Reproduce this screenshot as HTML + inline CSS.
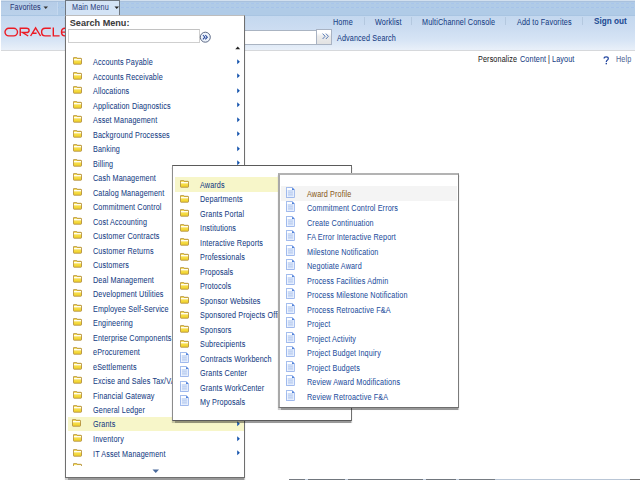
<!DOCTYPE html>
<html><head><meta charset="utf-8">
<style>
html,body{margin:0;padding:0;width:640px;height:480px;overflow:hidden;background:#fff}
body{position:relative;font-family:"Liberation Sans",sans-serif}
.t{position:absolute;white-space:nowrap;transform-origin:0 0;-webkit-text-stroke:0.05px currentColor;font-family:"Liberation Sans",sans-serif}
svg{display:block}
</style></head><body>
<div style="position:absolute;left:1px;top:0px;width:634px;height:1px;background:#d2e0ef"></div>
<div style="position:absolute;left:1px;top:1px;width:634px;height:1px;background:#a9c1dd"></div>
<div style="position:absolute;left:1px;top:2px;width:634px;height:13px;background:#b0cbe7"></div>
<div style="position:absolute;left:1px;top:3px;width:634px;height:1px;background:repeating-linear-gradient(90deg,#a9c6ec 0 3px,#b4cde6 3px 5px)"></div>
<div style="position:absolute;left:1px;top:7px;width:634px;height:1px;background:repeating-linear-gradient(90deg,#a6c3ea 0 3px,#b2cde9 3px 5px)"></div>
<div style="position:absolute;left:1px;top:2px;width:56px;height:13px;background:linear-gradient(#b6cde8,#bad1ea)"></div>
<div style="position:absolute;left:1px;top:15px;width:634px;height:1px;background:#a9c5e2"></div>
<div style="position:absolute;left:1px;top:16px;width:634px;height:34px;background:linear-gradient(#c4d8ef,#cbdcf1 35%,#d6e4f5 70%,#e9f0f9)"></div>
<div style="position:absolute;left:1px;top:50px;width:634px;height:1px;background:#d6d8db"></div>
<div class="t" style="left:10px;top:2.90px;font-size:8.5px;line-height:8.5px;color:#2c3a78;transform:scaleX(0.85);letter-spacing:0.15px;">Favorites</div>
<svg width="6" height="4" style="position:absolute;left:42.5px;top:5.5px"><path d="M0.5 0.5 H5 L2.75 3 Z" fill="#333"/></svg>
<div style="position:absolute;left:57px;top:2px;width:1px;height:13px;background:#c4d8ef"></div>
<svg width="64" height="12" viewBox="0 0 64 12" style="position:absolute;left:3px;top:26px">
<g fill="none" stroke="#ec1b24" stroke-width="1.4" stroke-linecap="butt">
<rect x="2" y="2.3" width="12.5" height="7.6" rx="3.8" ry="3.8"/>
<path d="M17.25 10 V2.3 H23.4 Q26.1 2.3 26.1 4.4 Q26.1 6.5 23.4 6.5 H19.5 L25.2 10"/>
<path d="M27.6 10 L32.6 1.8 L37.6 10 M29.6 7.3 H33.6"/>
<path d="M47.8 9.9 H42.2 Q38.6 9.9 38.6 6.1 Q38.6 2.3 42.2 2.3 H47.8"/>
<path d="M50.3 1.6 V9.9 H56.6"/>
<path d="M64.5 9.9 H62 Q58.5 9.9 58.5 6.1 Q58.5 2.3 62 2.3 H64.5 M59 6.1 H64.5"/>
</g></svg>
<div style="position:absolute;left:240px;top:30px;width:77px;height:15px;background:#fff;border:1px solid #aab4c2;box-sizing:border-box"></div>
<div style="position:absolute;left:316px;top:29px;width:16px;height:16px;background:linear-gradient(#fff 0,#fff 20%,#ececec 45%,#e2e2e2 100%);border:1px solid #a9b3c3;box-sizing:border-box"></div>
<svg width="8" height="7" viewBox="0 0 8 7" style="position:absolute;left:321.5px;top:33.3px"><path d="M0.6 0.6 L3.1 3.3 L0.6 6 M3.9 0.6 L6.4 3.3 L3.9 6" fill="none" stroke="#5a7db8" stroke-width="1"/></svg>
<div class="t" style="left:333.2px;top:17.90px;font-size:8.5px;line-height:8.5px;color:#163d84;transform:scaleX(0.85);letter-spacing:0.15px;">Home</div>
<div style="position:absolute;left:364px;top:17px;width:1px;height:8px;background:#b4c8df"></div>
<div class="t" style="left:374.5px;top:17.90px;font-size:8.5px;line-height:8.5px;color:#163d84;transform:scaleX(0.85);letter-spacing:0.15px;">Worklist</div>
<div style="position:absolute;left:411px;top:17px;width:1px;height:8px;background:#b4c8df"></div>
<div class="t" style="left:422.3px;top:17.90px;font-size:8.5px;line-height:8.5px;color:#163d84;transform:scaleX(0.85);letter-spacing:0.15px;">MultiChannel Console</div>
<div style="position:absolute;left:505px;top:17px;width:1px;height:8px;background:#b4c8df"></div>
<div class="t" style="left:517px;top:17.90px;font-size:8.5px;line-height:8.5px;color:#163d84;transform:scaleX(0.85);letter-spacing:0.15px;">Add to Favorites</div>
<div style="position:absolute;left:582px;top:17px;width:1px;height:8px;background:#b4c8df"></div>
<div class="t" style="left:594.2px;top:16.06px;font-size:9.5px;line-height:9.5px;color:#1d4a93;transform:scaleX(0.86);font-weight:bold;">Sign out</div>
<div class="t" style="left:336.5px;top:34.10px;font-size:8.5px;line-height:8.5px;color:#163d84;transform:scaleX(0.85);letter-spacing:0.15px;">Advanced Search</div>
<div class="t" style="left:478px;top:55.30px;font-size:8.5px;line-height:8.5px;color:#222;transform:scaleX(0.85);letter-spacing:0.15px;">Personalize</div>
<div class="t" style="left:519.7px;top:55.30px;font-size:8.5px;line-height:8.5px;color:#163d84;transform:scaleX(0.85);letter-spacing:0.15px;">Content</div>
<div class="t" style="left:548.2px;top:55.30px;font-size:8.5px;line-height:8.5px;color:#222;transform:scaleX(0.85);letter-spacing:0.15px;">|</div>
<div class="t" style="left:551.6px;top:55.30px;font-size:8.5px;line-height:8.5px;color:#163d84;transform:scaleX(0.85);letter-spacing:0.15px;">Layout</div>
<svg width="7" height="9" viewBox="0 0 7 9" style="position:absolute;left:603px;top:55.5px"><path d="M1.1 2.6 Q1.1 0.9 3.2 0.9 Q5.3 0.9 5.3 2.5 Q5.3 3.6 4.2 4.3 Q3.3 4.9 3.3 6" fill="none" stroke="#2447a0" stroke-width="1.25"/><rect x="2.6" y="6.9" width="1.4" height="1.4" fill="#2447a0"/></svg>
<div class="t" style="left:615.8px;top:55.30px;font-size:8.5px;line-height:8.5px;color:#4f6796;transform:scaleX(0.85);letter-spacing:0.15px;">Help</div>
<div style="position:absolute;left:65px;top:0px;width:55px;height:16px;background:#d3e3f5;border:1px solid #6f7780;border-bottom:none;box-sizing:border-box"></div>
<div class="t" style="left:72px;top:2.50px;font-size:8.5px;line-height:8.5px;color:#2f4380;transform:scaleX(0.85);letter-spacing:0.15px;">Main Menu</div>
<svg width="6" height="4" style="position:absolute;left:113.5px;top:5.7px"><path d="M0.5 0.5 H5 L2.75 3 Z" fill="#222"/></svg>
<div style="position:absolute;left:65px;top:15px;width:180px;height:463px;background:#fff;border:1px solid #6f6f6f;border-top-color:#bdbdbd;box-sizing:border-box;box-shadow:0 1.5px 1px rgba(0,0,0,0.4)"></div>
<div class="t" style="left:69.8px;top:18.60px;font-size:9.1px;line-height:9.1px;color:#3b3b3b;font-weight:bold;">Search Menu:</div>
<div style="position:absolute;left:68px;top:29px;width:132px;height:14px;background:#fff;border:1px solid #cfcfcf;border-top-color:#c2c2c2;box-sizing:border-box"></div>
<svg width="13" height="13" viewBox="0 0 13 13" style="position:absolute;left:199px;top:31px">
<circle cx="6.3" cy="6.2" r="5" fill="#eef4fc" stroke="#5d6a86" stroke-width="1"/>
<path d="M3.9 4 L5.9 6.2 L3.9 8.4 M6.3 4 L8.3 6.2 L6.3 8.4" fill="none" stroke="#27479a" stroke-width="1.05"/>
</svg>
<svg width="6" height="4" style="position:absolute;left:234.8px;top:46.3px"><path d="M0.3 3.3 H5.2 L2.75 0.5 Z" fill="#222"/></svg>
<div style="position:absolute;left:66px;top:52px;width:178px;height:414px;overflow:hidden">
<svg width="9" height="8" viewBox="0 0 9 8" style="position:absolute;left:7px;top:5.0px"><path d="M0.45 1.1 Q0.45 0.4 1.1 0.4 H3.4 Q4 0.4 4.2 1.3 H7.9 Q8.5 1.3 8.5 1.9 V6.6 Q8.5 7.2 7.9 7.2 H1.1 Q0.45 7.2 0.45 6.6 Z" fill="#f4d836" stroke="#a98333" stroke-width="0.8"/><rect x="0.9" y="2" width="7.2" height="1" fill="#fffdf0"/><rect x="0.9" y="3" width="7.2" height="1.2" fill="#fbe986"/><rect x="1.3" y="0.9" width="2.3" height="0.6" fill="#f9e58a"/></svg>
<div class="t" style="left:27px;top:6.05px;font-size:8.5px;line-height:8.5px;color:#163d84;transform:scaleX(0.85);letter-spacing:0.15px;">Accounts Payable</div>
<svg width="4" height="6" viewBox="0 0 4 6" style="position:absolute;left:170.7px;top:6.950000000000003px"><path d="M0.2 0.3 L2.9 2.75 L0.2 5.2 Z" fill="#1554ad"/></svg>
<svg width="9" height="8" viewBox="0 0 9 8" style="position:absolute;left:7px;top:19.5px"><path d="M0.45 1.1 Q0.45 0.4 1.1 0.4 H3.4 Q4 0.4 4.2 1.3 H7.9 Q8.5 1.3 8.5 1.9 V6.6 Q8.5 7.2 7.9 7.2 H1.1 Q0.45 7.2 0.45 6.6 Z" fill="#f4d836" stroke="#a98333" stroke-width="0.8"/><rect x="0.9" y="2" width="7.2" height="1" fill="#fffdf0"/><rect x="0.9" y="3" width="7.2" height="1.2" fill="#fbe986"/><rect x="1.3" y="0.9" width="2.3" height="0.6" fill="#f9e58a"/></svg>
<div class="t" style="left:27px;top:20.55px;font-size:8.5px;line-height:8.5px;color:#163d84;transform:scaleX(0.85);letter-spacing:0.15px;">Accounts Receivable</div>
<svg width="4" height="6" viewBox="0 0 4 6" style="position:absolute;left:170.7px;top:21.450000000000003px"><path d="M0.2 0.3 L2.9 2.75 L0.2 5.2 Z" fill="#1554ad"/></svg>
<svg width="9" height="8" viewBox="0 0 9 8" style="position:absolute;left:7px;top:34.0px"><path d="M0.45 1.1 Q0.45 0.4 1.1 0.4 H3.4 Q4 0.4 4.2 1.3 H7.9 Q8.5 1.3 8.5 1.9 V6.6 Q8.5 7.2 7.9 7.2 H1.1 Q0.45 7.2 0.45 6.6 Z" fill="#f4d836" stroke="#a98333" stroke-width="0.8"/><rect x="0.9" y="2" width="7.2" height="1" fill="#fffdf0"/><rect x="0.9" y="3" width="7.2" height="1.2" fill="#fbe986"/><rect x="1.3" y="0.9" width="2.3" height="0.6" fill="#f9e58a"/></svg>
<div class="t" style="left:27px;top:35.05px;font-size:8.5px;line-height:8.5px;color:#163d84;transform:scaleX(0.85);letter-spacing:0.15px;">Allocations</div>
<svg width="4" height="6" viewBox="0 0 4 6" style="position:absolute;left:170.7px;top:35.95px"><path d="M0.2 0.3 L2.9 2.75 L0.2 5.2 Z" fill="#1554ad"/></svg>
<svg width="9" height="8" viewBox="0 0 9 8" style="position:absolute;left:7px;top:48.5px"><path d="M0.45 1.1 Q0.45 0.4 1.1 0.4 H3.4 Q4 0.4 4.2 1.3 H7.9 Q8.5 1.3 8.5 1.9 V6.6 Q8.5 7.2 7.9 7.2 H1.1 Q0.45 7.2 0.45 6.6 Z" fill="#f4d836" stroke="#a98333" stroke-width="0.8"/><rect x="0.9" y="2" width="7.2" height="1" fill="#fffdf0"/><rect x="0.9" y="3" width="7.2" height="1.2" fill="#fbe986"/><rect x="1.3" y="0.9" width="2.3" height="0.6" fill="#f9e58a"/></svg>
<div class="t" style="left:27px;top:49.55px;font-size:8.5px;line-height:8.5px;color:#163d84;transform:scaleX(0.85);letter-spacing:0.15px;">Application Diagnostics</div>
<svg width="4" height="6" viewBox="0 0 4 6" style="position:absolute;left:170.7px;top:50.45px"><path d="M0.2 0.3 L2.9 2.75 L0.2 5.2 Z" fill="#1554ad"/></svg>
<svg width="9" height="8" viewBox="0 0 9 8" style="position:absolute;left:7px;top:63.0px"><path d="M0.45 1.1 Q0.45 0.4 1.1 0.4 H3.4 Q4 0.4 4.2 1.3 H7.9 Q8.5 1.3 8.5 1.9 V6.6 Q8.5 7.2 7.9 7.2 H1.1 Q0.45 7.2 0.45 6.6 Z" fill="#f4d836" stroke="#a98333" stroke-width="0.8"/><rect x="0.9" y="2" width="7.2" height="1" fill="#fffdf0"/><rect x="0.9" y="3" width="7.2" height="1.2" fill="#fbe986"/><rect x="1.3" y="0.9" width="2.3" height="0.6" fill="#f9e58a"/></svg>
<div class="t" style="left:27px;top:64.05px;font-size:8.5px;line-height:8.5px;color:#163d84;transform:scaleX(0.85);letter-spacing:0.15px;">Asset Management</div>
<svg width="4" height="6" viewBox="0 0 4 6" style="position:absolute;left:170.7px;top:64.95px"><path d="M0.2 0.3 L2.9 2.75 L0.2 5.2 Z" fill="#1554ad"/></svg>
<svg width="9" height="8" viewBox="0 0 9 8" style="position:absolute;left:7px;top:77.5px"><path d="M0.45 1.1 Q0.45 0.4 1.1 0.4 H3.4 Q4 0.4 4.2 1.3 H7.9 Q8.5 1.3 8.5 1.9 V6.6 Q8.5 7.2 7.9 7.2 H1.1 Q0.45 7.2 0.45 6.6 Z" fill="#f4d836" stroke="#a98333" stroke-width="0.8"/><rect x="0.9" y="2" width="7.2" height="1" fill="#fffdf0"/><rect x="0.9" y="3" width="7.2" height="1.2" fill="#fbe986"/><rect x="1.3" y="0.9" width="2.3" height="0.6" fill="#f9e58a"/></svg>
<div class="t" style="left:27px;top:78.55px;font-size:8.5px;line-height:8.5px;color:#163d84;transform:scaleX(0.85);letter-spacing:0.15px;">Background Processes</div>
<svg width="4" height="6" viewBox="0 0 4 6" style="position:absolute;left:170.7px;top:79.44999999999999px"><path d="M0.2 0.3 L2.9 2.75 L0.2 5.2 Z" fill="#1554ad"/></svg>
<svg width="9" height="8" viewBox="0 0 9 8" style="position:absolute;left:7px;top:92.0px"><path d="M0.45 1.1 Q0.45 0.4 1.1 0.4 H3.4 Q4 0.4 4.2 1.3 H7.9 Q8.5 1.3 8.5 1.9 V6.6 Q8.5 7.2 7.9 7.2 H1.1 Q0.45 7.2 0.45 6.6 Z" fill="#f4d836" stroke="#a98333" stroke-width="0.8"/><rect x="0.9" y="2" width="7.2" height="1" fill="#fffdf0"/><rect x="0.9" y="3" width="7.2" height="1.2" fill="#fbe986"/><rect x="1.3" y="0.9" width="2.3" height="0.6" fill="#f9e58a"/></svg>
<div class="t" style="left:27px;top:93.05px;font-size:8.5px;line-height:8.5px;color:#163d84;transform:scaleX(0.85);letter-spacing:0.15px;">Banking</div>
<svg width="4" height="6" viewBox="0 0 4 6" style="position:absolute;left:170.7px;top:93.94999999999999px"><path d="M0.2 0.3 L2.9 2.75 L0.2 5.2 Z" fill="#1554ad"/></svg>
<svg width="9" height="8" viewBox="0 0 9 8" style="position:absolute;left:7px;top:106.5px"><path d="M0.45 1.1 Q0.45 0.4 1.1 0.4 H3.4 Q4 0.4 4.2 1.3 H7.9 Q8.5 1.3 8.5 1.9 V6.6 Q8.5 7.2 7.9 7.2 H1.1 Q0.45 7.2 0.45 6.6 Z" fill="#f4d836" stroke="#a98333" stroke-width="0.8"/><rect x="0.9" y="2" width="7.2" height="1" fill="#fffdf0"/><rect x="0.9" y="3" width="7.2" height="1.2" fill="#fbe986"/><rect x="1.3" y="0.9" width="2.3" height="0.6" fill="#f9e58a"/></svg>
<div class="t" style="left:27px;top:107.55px;font-size:8.5px;line-height:8.5px;color:#163d84;transform:scaleX(0.85);letter-spacing:0.15px;">Billing</div>
<svg width="4" height="6" viewBox="0 0 4 6" style="position:absolute;left:170.7px;top:108.44999999999999px"><path d="M0.2 0.3 L2.9 2.75 L0.2 5.2 Z" fill="#1554ad"/></svg>
<svg width="9" height="8" viewBox="0 0 9 8" style="position:absolute;left:7px;top:121.0px"><path d="M0.45 1.1 Q0.45 0.4 1.1 0.4 H3.4 Q4 0.4 4.2 1.3 H7.9 Q8.5 1.3 8.5 1.9 V6.6 Q8.5 7.2 7.9 7.2 H1.1 Q0.45 7.2 0.45 6.6 Z" fill="#f4d836" stroke="#a98333" stroke-width="0.8"/><rect x="0.9" y="2" width="7.2" height="1" fill="#fffdf0"/><rect x="0.9" y="3" width="7.2" height="1.2" fill="#fbe986"/><rect x="1.3" y="0.9" width="2.3" height="0.6" fill="#f9e58a"/></svg>
<div class="t" style="left:27px;top:122.05px;font-size:8.5px;line-height:8.5px;color:#163d84;transform:scaleX(0.85);letter-spacing:0.15px;">Cash Management</div>
<svg width="4" height="6" viewBox="0 0 4 6" style="position:absolute;left:170.7px;top:122.94999999999999px"><path d="M0.2 0.3 L2.9 2.75 L0.2 5.2 Z" fill="#1554ad"/></svg>
<svg width="9" height="8" viewBox="0 0 9 8" style="position:absolute;left:7px;top:135.5px"><path d="M0.45 1.1 Q0.45 0.4 1.1 0.4 H3.4 Q4 0.4 4.2 1.3 H7.9 Q8.5 1.3 8.5 1.9 V6.6 Q8.5 7.2 7.9 7.2 H1.1 Q0.45 7.2 0.45 6.6 Z" fill="#f4d836" stroke="#a98333" stroke-width="0.8"/><rect x="0.9" y="2" width="7.2" height="1" fill="#fffdf0"/><rect x="0.9" y="3" width="7.2" height="1.2" fill="#fbe986"/><rect x="1.3" y="0.9" width="2.3" height="0.6" fill="#f9e58a"/></svg>
<div class="t" style="left:27px;top:136.55px;font-size:8.5px;line-height:8.5px;color:#163d84;transform:scaleX(0.85);letter-spacing:0.15px;">Catalog Management</div>
<svg width="4" height="6" viewBox="0 0 4 6" style="position:absolute;left:170.7px;top:137.45px"><path d="M0.2 0.3 L2.9 2.75 L0.2 5.2 Z" fill="#1554ad"/></svg>
<svg width="9" height="8" viewBox="0 0 9 8" style="position:absolute;left:7px;top:150.0px"><path d="M0.45 1.1 Q0.45 0.4 1.1 0.4 H3.4 Q4 0.4 4.2 1.3 H7.9 Q8.5 1.3 8.5 1.9 V6.6 Q8.5 7.2 7.9 7.2 H1.1 Q0.45 7.2 0.45 6.6 Z" fill="#f4d836" stroke="#a98333" stroke-width="0.8"/><rect x="0.9" y="2" width="7.2" height="1" fill="#fffdf0"/><rect x="0.9" y="3" width="7.2" height="1.2" fill="#fbe986"/><rect x="1.3" y="0.9" width="2.3" height="0.6" fill="#f9e58a"/></svg>
<div class="t" style="left:27px;top:151.05px;font-size:8.5px;line-height:8.5px;color:#163d84;transform:scaleX(0.85);letter-spacing:0.15px;">Commitment Control</div>
<svg width="4" height="6" viewBox="0 0 4 6" style="position:absolute;left:170.7px;top:151.95px"><path d="M0.2 0.3 L2.9 2.75 L0.2 5.2 Z" fill="#1554ad"/></svg>
<svg width="9" height="8" viewBox="0 0 9 8" style="position:absolute;left:7px;top:164.5px"><path d="M0.45 1.1 Q0.45 0.4 1.1 0.4 H3.4 Q4 0.4 4.2 1.3 H7.9 Q8.5 1.3 8.5 1.9 V6.6 Q8.5 7.2 7.9 7.2 H1.1 Q0.45 7.2 0.45 6.6 Z" fill="#f4d836" stroke="#a98333" stroke-width="0.8"/><rect x="0.9" y="2" width="7.2" height="1" fill="#fffdf0"/><rect x="0.9" y="3" width="7.2" height="1.2" fill="#fbe986"/><rect x="1.3" y="0.9" width="2.3" height="0.6" fill="#f9e58a"/></svg>
<div class="t" style="left:27px;top:165.55px;font-size:8.5px;line-height:8.5px;color:#163d84;transform:scaleX(0.85);letter-spacing:0.15px;">Cost Accounting</div>
<svg width="4" height="6" viewBox="0 0 4 6" style="position:absolute;left:170.7px;top:166.45px"><path d="M0.2 0.3 L2.9 2.75 L0.2 5.2 Z" fill="#1554ad"/></svg>
<svg width="9" height="8" viewBox="0 0 9 8" style="position:absolute;left:7px;top:179.0px"><path d="M0.45 1.1 Q0.45 0.4 1.1 0.4 H3.4 Q4 0.4 4.2 1.3 H7.9 Q8.5 1.3 8.5 1.9 V6.6 Q8.5 7.2 7.9 7.2 H1.1 Q0.45 7.2 0.45 6.6 Z" fill="#f4d836" stroke="#a98333" stroke-width="0.8"/><rect x="0.9" y="2" width="7.2" height="1" fill="#fffdf0"/><rect x="0.9" y="3" width="7.2" height="1.2" fill="#fbe986"/><rect x="1.3" y="0.9" width="2.3" height="0.6" fill="#f9e58a"/></svg>
<div class="t" style="left:27px;top:180.05px;font-size:8.5px;line-height:8.5px;color:#163d84;transform:scaleX(0.85);letter-spacing:0.15px;">Customer Contracts</div>
<svg width="4" height="6" viewBox="0 0 4 6" style="position:absolute;left:170.7px;top:180.95px"><path d="M0.2 0.3 L2.9 2.75 L0.2 5.2 Z" fill="#1554ad"/></svg>
<svg width="9" height="8" viewBox="0 0 9 8" style="position:absolute;left:7px;top:193.5px"><path d="M0.45 1.1 Q0.45 0.4 1.1 0.4 H3.4 Q4 0.4 4.2 1.3 H7.9 Q8.5 1.3 8.5 1.9 V6.6 Q8.5 7.2 7.9 7.2 H1.1 Q0.45 7.2 0.45 6.6 Z" fill="#f4d836" stroke="#a98333" stroke-width="0.8"/><rect x="0.9" y="2" width="7.2" height="1" fill="#fffdf0"/><rect x="0.9" y="3" width="7.2" height="1.2" fill="#fbe986"/><rect x="1.3" y="0.9" width="2.3" height="0.6" fill="#f9e58a"/></svg>
<div class="t" style="left:27px;top:194.55px;font-size:8.5px;line-height:8.5px;color:#163d84;transform:scaleX(0.85);letter-spacing:0.15px;">Customer Returns</div>
<svg width="4" height="6" viewBox="0 0 4 6" style="position:absolute;left:170.7px;top:195.45px"><path d="M0.2 0.3 L2.9 2.75 L0.2 5.2 Z" fill="#1554ad"/></svg>
<svg width="9" height="8" viewBox="0 0 9 8" style="position:absolute;left:7px;top:208.0px"><path d="M0.45 1.1 Q0.45 0.4 1.1 0.4 H3.4 Q4 0.4 4.2 1.3 H7.9 Q8.5 1.3 8.5 1.9 V6.6 Q8.5 7.2 7.9 7.2 H1.1 Q0.45 7.2 0.45 6.6 Z" fill="#f4d836" stroke="#a98333" stroke-width="0.8"/><rect x="0.9" y="2" width="7.2" height="1" fill="#fffdf0"/><rect x="0.9" y="3" width="7.2" height="1.2" fill="#fbe986"/><rect x="1.3" y="0.9" width="2.3" height="0.6" fill="#f9e58a"/></svg>
<div class="t" style="left:27px;top:209.05px;font-size:8.5px;line-height:8.5px;color:#163d84;transform:scaleX(0.85);letter-spacing:0.15px;">Customers</div>
<svg width="4" height="6" viewBox="0 0 4 6" style="position:absolute;left:170.7px;top:209.95px"><path d="M0.2 0.3 L2.9 2.75 L0.2 5.2 Z" fill="#1554ad"/></svg>
<svg width="9" height="8" viewBox="0 0 9 8" style="position:absolute;left:7px;top:222.5px"><path d="M0.45 1.1 Q0.45 0.4 1.1 0.4 H3.4 Q4 0.4 4.2 1.3 H7.9 Q8.5 1.3 8.5 1.9 V6.6 Q8.5 7.2 7.9 7.2 H1.1 Q0.45 7.2 0.45 6.6 Z" fill="#f4d836" stroke="#a98333" stroke-width="0.8"/><rect x="0.9" y="2" width="7.2" height="1" fill="#fffdf0"/><rect x="0.9" y="3" width="7.2" height="1.2" fill="#fbe986"/><rect x="1.3" y="0.9" width="2.3" height="0.6" fill="#f9e58a"/></svg>
<div class="t" style="left:27px;top:223.55px;font-size:8.5px;line-height:8.5px;color:#163d84;transform:scaleX(0.85);letter-spacing:0.15px;">Deal Management</div>
<svg width="4" height="6" viewBox="0 0 4 6" style="position:absolute;left:170.7px;top:224.45px"><path d="M0.2 0.3 L2.9 2.75 L0.2 5.2 Z" fill="#1554ad"/></svg>
<svg width="9" height="8" viewBox="0 0 9 8" style="position:absolute;left:7px;top:237.0px"><path d="M0.45 1.1 Q0.45 0.4 1.1 0.4 H3.4 Q4 0.4 4.2 1.3 H7.9 Q8.5 1.3 8.5 1.9 V6.6 Q8.5 7.2 7.9 7.2 H1.1 Q0.45 7.2 0.45 6.6 Z" fill="#f4d836" stroke="#a98333" stroke-width="0.8"/><rect x="0.9" y="2" width="7.2" height="1" fill="#fffdf0"/><rect x="0.9" y="3" width="7.2" height="1.2" fill="#fbe986"/><rect x="1.3" y="0.9" width="2.3" height="0.6" fill="#f9e58a"/></svg>
<div class="t" style="left:27px;top:238.05px;font-size:8.5px;line-height:8.5px;color:#163d84;transform:scaleX(0.85);letter-spacing:0.15px;">Development Utilities</div>
<svg width="4" height="6" viewBox="0 0 4 6" style="position:absolute;left:170.7px;top:238.95px"><path d="M0.2 0.3 L2.9 2.75 L0.2 5.2 Z" fill="#1554ad"/></svg>
<svg width="9" height="8" viewBox="0 0 9 8" style="position:absolute;left:7px;top:251.5px"><path d="M0.45 1.1 Q0.45 0.4 1.1 0.4 H3.4 Q4 0.4 4.2 1.3 H7.9 Q8.5 1.3 8.5 1.9 V6.6 Q8.5 7.2 7.9 7.2 H1.1 Q0.45 7.2 0.45 6.6 Z" fill="#f4d836" stroke="#a98333" stroke-width="0.8"/><rect x="0.9" y="2" width="7.2" height="1" fill="#fffdf0"/><rect x="0.9" y="3" width="7.2" height="1.2" fill="#fbe986"/><rect x="1.3" y="0.9" width="2.3" height="0.6" fill="#f9e58a"/></svg>
<div class="t" style="left:27px;top:252.55px;font-size:8.5px;line-height:8.5px;color:#163d84;transform:scaleX(0.85);letter-spacing:0.15px;">Employee Self-Service</div>
<svg width="4" height="6" viewBox="0 0 4 6" style="position:absolute;left:170.7px;top:253.45px"><path d="M0.2 0.3 L2.9 2.75 L0.2 5.2 Z" fill="#1554ad"/></svg>
<svg width="9" height="8" viewBox="0 0 9 8" style="position:absolute;left:7px;top:266.0px"><path d="M0.45 1.1 Q0.45 0.4 1.1 0.4 H3.4 Q4 0.4 4.2 1.3 H7.9 Q8.5 1.3 8.5 1.9 V6.6 Q8.5 7.2 7.9 7.2 H1.1 Q0.45 7.2 0.45 6.6 Z" fill="#f4d836" stroke="#a98333" stroke-width="0.8"/><rect x="0.9" y="2" width="7.2" height="1" fill="#fffdf0"/><rect x="0.9" y="3" width="7.2" height="1.2" fill="#fbe986"/><rect x="1.3" y="0.9" width="2.3" height="0.6" fill="#f9e58a"/></svg>
<div class="t" style="left:27px;top:267.05px;font-size:8.5px;line-height:8.5px;color:#163d84;transform:scaleX(0.85);letter-spacing:0.15px;">Engineering</div>
<svg width="4" height="6" viewBox="0 0 4 6" style="position:absolute;left:170.7px;top:267.95px"><path d="M0.2 0.3 L2.9 2.75 L0.2 5.2 Z" fill="#1554ad"/></svg>
<svg width="9" height="8" viewBox="0 0 9 8" style="position:absolute;left:7px;top:280.5px"><path d="M0.45 1.1 Q0.45 0.4 1.1 0.4 H3.4 Q4 0.4 4.2 1.3 H7.9 Q8.5 1.3 8.5 1.9 V6.6 Q8.5 7.2 7.9 7.2 H1.1 Q0.45 7.2 0.45 6.6 Z" fill="#f4d836" stroke="#a98333" stroke-width="0.8"/><rect x="0.9" y="2" width="7.2" height="1" fill="#fffdf0"/><rect x="0.9" y="3" width="7.2" height="1.2" fill="#fbe986"/><rect x="1.3" y="0.9" width="2.3" height="0.6" fill="#f9e58a"/></svg>
<div class="t" style="left:27px;top:281.55px;font-size:8.5px;line-height:8.5px;color:#163d84;transform:scaleX(0.85);letter-spacing:0.15px;">Enterprise Components</div>
<svg width="4" height="6" viewBox="0 0 4 6" style="position:absolute;left:170.7px;top:282.45px"><path d="M0.2 0.3 L2.9 2.75 L0.2 5.2 Z" fill="#1554ad"/></svg>
<svg width="9" height="8" viewBox="0 0 9 8" style="position:absolute;left:7px;top:295.0px"><path d="M0.45 1.1 Q0.45 0.4 1.1 0.4 H3.4 Q4 0.4 4.2 1.3 H7.9 Q8.5 1.3 8.5 1.9 V6.6 Q8.5 7.2 7.9 7.2 H1.1 Q0.45 7.2 0.45 6.6 Z" fill="#f4d836" stroke="#a98333" stroke-width="0.8"/><rect x="0.9" y="2" width="7.2" height="1" fill="#fffdf0"/><rect x="0.9" y="3" width="7.2" height="1.2" fill="#fbe986"/><rect x="1.3" y="0.9" width="2.3" height="0.6" fill="#f9e58a"/></svg>
<div class="t" style="left:27px;top:296.05px;font-size:8.5px;line-height:8.5px;color:#163d84;transform:scaleX(0.85);letter-spacing:0.15px;">eProcurement</div>
<svg width="4" height="6" viewBox="0 0 4 6" style="position:absolute;left:170.7px;top:296.95px"><path d="M0.2 0.3 L2.9 2.75 L0.2 5.2 Z" fill="#1554ad"/></svg>
<svg width="9" height="8" viewBox="0 0 9 8" style="position:absolute;left:7px;top:309.5px"><path d="M0.45 1.1 Q0.45 0.4 1.1 0.4 H3.4 Q4 0.4 4.2 1.3 H7.9 Q8.5 1.3 8.5 1.9 V6.6 Q8.5 7.2 7.9 7.2 H1.1 Q0.45 7.2 0.45 6.6 Z" fill="#f4d836" stroke="#a98333" stroke-width="0.8"/><rect x="0.9" y="2" width="7.2" height="1" fill="#fffdf0"/><rect x="0.9" y="3" width="7.2" height="1.2" fill="#fbe986"/><rect x="1.3" y="0.9" width="2.3" height="0.6" fill="#f9e58a"/></svg>
<div class="t" style="left:27px;top:310.55px;font-size:8.5px;line-height:8.5px;color:#163d84;transform:scaleX(0.85);letter-spacing:0.15px;">eSettlements</div>
<svg width="4" height="6" viewBox="0 0 4 6" style="position:absolute;left:170.7px;top:311.45px"><path d="M0.2 0.3 L2.9 2.75 L0.2 5.2 Z" fill="#1554ad"/></svg>
<svg width="9" height="8" viewBox="0 0 9 8" style="position:absolute;left:7px;top:324.0px"><path d="M0.45 1.1 Q0.45 0.4 1.1 0.4 H3.4 Q4 0.4 4.2 1.3 H7.9 Q8.5 1.3 8.5 1.9 V6.6 Q8.5 7.2 7.9 7.2 H1.1 Q0.45 7.2 0.45 6.6 Z" fill="#f4d836" stroke="#a98333" stroke-width="0.8"/><rect x="0.9" y="2" width="7.2" height="1" fill="#fffdf0"/><rect x="0.9" y="3" width="7.2" height="1.2" fill="#fbe986"/><rect x="1.3" y="0.9" width="2.3" height="0.6" fill="#f9e58a"/></svg>
<div class="t" style="left:27px;top:325.05px;font-size:8.5px;line-height:8.5px;color:#163d84;transform:scaleX(0.85);letter-spacing:0.15px;">Excise and Sales Tax/VAT</div>
<svg width="4" height="6" viewBox="0 0 4 6" style="position:absolute;left:170.7px;top:325.95px"><path d="M0.2 0.3 L2.9 2.75 L0.2 5.2 Z" fill="#1554ad"/></svg>
<svg width="9" height="8" viewBox="0 0 9 8" style="position:absolute;left:7px;top:338.5px"><path d="M0.45 1.1 Q0.45 0.4 1.1 0.4 H3.4 Q4 0.4 4.2 1.3 H7.9 Q8.5 1.3 8.5 1.9 V6.6 Q8.5 7.2 7.9 7.2 H1.1 Q0.45 7.2 0.45 6.6 Z" fill="#f4d836" stroke="#a98333" stroke-width="0.8"/><rect x="0.9" y="2" width="7.2" height="1" fill="#fffdf0"/><rect x="0.9" y="3" width="7.2" height="1.2" fill="#fbe986"/><rect x="1.3" y="0.9" width="2.3" height="0.6" fill="#f9e58a"/></svg>
<div class="t" style="left:27px;top:339.55px;font-size:8.5px;line-height:8.5px;color:#163d84;transform:scaleX(0.85);letter-spacing:0.15px;">Financial Gateway</div>
<svg width="4" height="6" viewBox="0 0 4 6" style="position:absolute;left:170.7px;top:340.45px"><path d="M0.2 0.3 L2.9 2.75 L0.2 5.2 Z" fill="#1554ad"/></svg>
<svg width="9" height="8" viewBox="0 0 9 8" style="position:absolute;left:7px;top:353.0px"><path d="M0.45 1.1 Q0.45 0.4 1.1 0.4 H3.4 Q4 0.4 4.2 1.3 H7.9 Q8.5 1.3 8.5 1.9 V6.6 Q8.5 7.2 7.9 7.2 H1.1 Q0.45 7.2 0.45 6.6 Z" fill="#f4d836" stroke="#a98333" stroke-width="0.8"/><rect x="0.9" y="2" width="7.2" height="1" fill="#fffdf0"/><rect x="0.9" y="3" width="7.2" height="1.2" fill="#fbe986"/><rect x="1.3" y="0.9" width="2.3" height="0.6" fill="#f9e58a"/></svg>
<div class="t" style="left:27px;top:354.05px;font-size:8.5px;line-height:8.5px;color:#163d84;transform:scaleX(0.85);letter-spacing:0.15px;">General Ledger</div>
<svg width="4" height="6" viewBox="0 0 4 6" style="position:absolute;left:170.7px;top:354.95px"><path d="M0.2 0.3 L2.9 2.75 L0.2 5.2 Z" fill="#1554ad"/></svg>
<div style="position:absolute;left:1.5px;top:364.75px;width:176px;height:14.5px;background:#f7f6c9"></div>
<svg width="9" height="8" viewBox="0 0 9 8" style="position:absolute;left:6px;top:366.5px"><path d="M0.45 1.1 Q0.45 0.4 1.1 0.4 H3.4 Q4 0.4 4.2 1.3 H7.9 Q8.5 1.3 8.5 1.9 V6.6 Q8.5 7.2 7.9 7.2 H1.1 Q0.45 7.2 0.45 6.6 Z" fill="#f4d836" stroke="#a98333" stroke-width="0.8"/><rect x="0.9" y="2" width="7.2" height="1" fill="#fffdf0"/><rect x="0.9" y="3" width="7.2" height="1.2" fill="#fbe986"/><rect x="1.3" y="0.9" width="2.3" height="0.6" fill="#f9e58a"/></svg>
<div class="t" style="left:26.5px;top:367.55px;font-size:8.5px;line-height:8.5px;color:#163d84;transform:scaleX(0.85);letter-spacing:0.15px;">Grants</div>
<svg width="4" height="6" viewBox="0 0 4 6" style="position:absolute;left:170.7px;top:369.45px"><path d="M0.2 0.3 L2.9 2.75 L0.2 5.2 Z" fill="#1554ad"/></svg>
<svg width="9" height="8" viewBox="0 0 9 8" style="position:absolute;left:7px;top:382.0px"><path d="M0.45 1.1 Q0.45 0.4 1.1 0.4 H3.4 Q4 0.4 4.2 1.3 H7.9 Q8.5 1.3 8.5 1.9 V6.6 Q8.5 7.2 7.9 7.2 H1.1 Q0.45 7.2 0.45 6.6 Z" fill="#f4d836" stroke="#a98333" stroke-width="0.8"/><rect x="0.9" y="2" width="7.2" height="1" fill="#fffdf0"/><rect x="0.9" y="3" width="7.2" height="1.2" fill="#fbe986"/><rect x="1.3" y="0.9" width="2.3" height="0.6" fill="#f9e58a"/></svg>
<div class="t" style="left:27px;top:383.05px;font-size:8.5px;line-height:8.5px;color:#163d84;transform:scaleX(0.85);letter-spacing:0.15px;">Inventory</div>
<svg width="4" height="6" viewBox="0 0 4 6" style="position:absolute;left:170.7px;top:383.95px"><path d="M0.2 0.3 L2.9 2.75 L0.2 5.2 Z" fill="#1554ad"/></svg>
<svg width="9" height="8" viewBox="0 0 9 8" style="position:absolute;left:7px;top:396.5px"><path d="M0.45 1.1 Q0.45 0.4 1.1 0.4 H3.4 Q4 0.4 4.2 1.3 H7.9 Q8.5 1.3 8.5 1.9 V6.6 Q8.5 7.2 7.9 7.2 H1.1 Q0.45 7.2 0.45 6.6 Z" fill="#f4d836" stroke="#a98333" stroke-width="0.8"/><rect x="0.9" y="2" width="7.2" height="1" fill="#fffdf0"/><rect x="0.9" y="3" width="7.2" height="1.2" fill="#fbe986"/><rect x="1.3" y="0.9" width="2.3" height="0.6" fill="#f9e58a"/></svg>
<div class="t" style="left:27px;top:397.55px;font-size:8.5px;line-height:8.5px;color:#163d84;transform:scaleX(0.85);letter-spacing:0.15px;">IT Asset Management</div>
<svg width="4" height="6" viewBox="0 0 4 6" style="position:absolute;left:170.7px;top:398.45px"><path d="M0.2 0.3 L2.9 2.75 L0.2 5.2 Z" fill="#1554ad"/></svg>
<svg width="9" height="8" viewBox="0 0 9 8" style="position:absolute;left:7px;top:411.0px"><path d="M0.45 1.1 Q0.45 0.4 1.1 0.4 H3.4 Q4 0.4 4.2 1.3 H7.9 Q8.5 1.3 8.5 1.9 V6.6 Q8.5 7.2 7.9 7.2 H1.1 Q0.45 7.2 0.45 6.6 Z" fill="#f4d836" stroke="#a98333" stroke-width="0.8"/><rect x="0.9" y="2" width="7.2" height="1" fill="#fffdf0"/><rect x="0.9" y="3" width="7.2" height="1.2" fill="#fbe986"/><rect x="1.3" y="0.9" width="2.3" height="0.6" fill="#f9e58a"/></svg>
</div>
<svg width="8" height="5" style="position:absolute;left:151.5px;top:468.5px"><path d="M0.5 0.5 H7 L3.75 4 Z" fill="#4a6a9c"/></svg>
<div style="position:absolute;left:172px;top:165px;width:180px;height:256px;background:#fff;border:1px solid #5a5a5a;border-left-color:#8c8c8c;border-right-color:#707070;box-sizing:border-box;box-shadow:0 1.5px 1px rgba(0,0,0,0.4)"></div>
<div style="position:absolute;left:173px;top:166px;width:178px;height:254px;overflow:hidden">
<div style="position:absolute;left:2.25px;top:11.0px;width:173px;height:14.75px;background:#f7f6c9"></div>
<svg width="9" height="8" viewBox="0 0 9 8" style="position:absolute;left:7px;top:14.25px"><path d="M0.45 1.1 Q0.45 0.4 1.1 0.4 H3.4 Q4 0.4 4.2 1.3 H7.9 Q8.5 1.3 8.5 1.9 V6.6 Q8.5 7.2 7.9 7.2 H1.1 Q0.45 7.2 0.45 6.6 Z" fill="#f4d836" stroke="#a98333" stroke-width="0.8"/><rect x="0.9" y="2" width="7.2" height="1" fill="#fffdf0"/><rect x="0.9" y="3" width="7.2" height="1.2" fill="#fbe986"/><rect x="1.3" y="0.9" width="2.3" height="0.6" fill="#f9e58a"/></svg>
<div class="t" style="left:27px;top:14.55px;font-size:8.5px;line-height:8.5px;color:#163d84;transform:scaleX(0.85);letter-spacing:0.15px;">Awards</div>
<svg width="9" height="8" viewBox="0 0 9 8" style="position:absolute;left:7px;top:28.75px"><path d="M0.45 1.1 Q0.45 0.4 1.1 0.4 H3.4 Q4 0.4 4.2 1.3 H7.9 Q8.5 1.3 8.5 1.9 V6.6 Q8.5 7.2 7.9 7.2 H1.1 Q0.45 7.2 0.45 6.6 Z" fill="#f4d836" stroke="#a98333" stroke-width="0.8"/><rect x="0.9" y="2" width="7.2" height="1" fill="#fffdf0"/><rect x="0.9" y="3" width="7.2" height="1.2" fill="#fbe986"/><rect x="1.3" y="0.9" width="2.3" height="0.6" fill="#f9e58a"/></svg>
<div class="t" style="left:27px;top:29.05px;font-size:8.5px;line-height:8.5px;color:#163d84;transform:scaleX(0.85);letter-spacing:0.15px;">Departments</div>
<svg width="9" height="8" viewBox="0 0 9 8" style="position:absolute;left:7px;top:43.25px"><path d="M0.45 1.1 Q0.45 0.4 1.1 0.4 H3.4 Q4 0.4 4.2 1.3 H7.9 Q8.5 1.3 8.5 1.9 V6.6 Q8.5 7.2 7.9 7.2 H1.1 Q0.45 7.2 0.45 6.6 Z" fill="#f4d836" stroke="#a98333" stroke-width="0.8"/><rect x="0.9" y="2" width="7.2" height="1" fill="#fffdf0"/><rect x="0.9" y="3" width="7.2" height="1.2" fill="#fbe986"/><rect x="1.3" y="0.9" width="2.3" height="0.6" fill="#f9e58a"/></svg>
<div class="t" style="left:27px;top:43.55px;font-size:8.5px;line-height:8.5px;color:#163d84;transform:scaleX(0.85);letter-spacing:0.15px;">Grants Portal</div>
<svg width="9" height="8" viewBox="0 0 9 8" style="position:absolute;left:7px;top:57.75px"><path d="M0.45 1.1 Q0.45 0.4 1.1 0.4 H3.4 Q4 0.4 4.2 1.3 H7.9 Q8.5 1.3 8.5 1.9 V6.6 Q8.5 7.2 7.9 7.2 H1.1 Q0.45 7.2 0.45 6.6 Z" fill="#f4d836" stroke="#a98333" stroke-width="0.8"/><rect x="0.9" y="2" width="7.2" height="1" fill="#fffdf0"/><rect x="0.9" y="3" width="7.2" height="1.2" fill="#fbe986"/><rect x="1.3" y="0.9" width="2.3" height="0.6" fill="#f9e58a"/></svg>
<div class="t" style="left:27px;top:58.05px;font-size:8.5px;line-height:8.5px;color:#163d84;transform:scaleX(0.85);letter-spacing:0.15px;">Institutions</div>
<svg width="9" height="8" viewBox="0 0 9 8" style="position:absolute;left:7px;top:72.25px"><path d="M0.45 1.1 Q0.45 0.4 1.1 0.4 H3.4 Q4 0.4 4.2 1.3 H7.9 Q8.5 1.3 8.5 1.9 V6.6 Q8.5 7.2 7.9 7.2 H1.1 Q0.45 7.2 0.45 6.6 Z" fill="#f4d836" stroke="#a98333" stroke-width="0.8"/><rect x="0.9" y="2" width="7.2" height="1" fill="#fffdf0"/><rect x="0.9" y="3" width="7.2" height="1.2" fill="#fbe986"/><rect x="1.3" y="0.9" width="2.3" height="0.6" fill="#f9e58a"/></svg>
<div class="t" style="left:27px;top:72.55px;font-size:8.5px;line-height:8.5px;color:#163d84;transform:scaleX(0.85);letter-spacing:0.15px;">Interactive Reports</div>
<svg width="9" height="8" viewBox="0 0 9 8" style="position:absolute;left:7px;top:86.75px"><path d="M0.45 1.1 Q0.45 0.4 1.1 0.4 H3.4 Q4 0.4 4.2 1.3 H7.9 Q8.5 1.3 8.5 1.9 V6.6 Q8.5 7.2 7.9 7.2 H1.1 Q0.45 7.2 0.45 6.6 Z" fill="#f4d836" stroke="#a98333" stroke-width="0.8"/><rect x="0.9" y="2" width="7.2" height="1" fill="#fffdf0"/><rect x="0.9" y="3" width="7.2" height="1.2" fill="#fbe986"/><rect x="1.3" y="0.9" width="2.3" height="0.6" fill="#f9e58a"/></svg>
<div class="t" style="left:27px;top:87.05px;font-size:8.5px;line-height:8.5px;color:#163d84;transform:scaleX(0.85);letter-spacing:0.15px;">Professionals</div>
<svg width="9" height="8" viewBox="0 0 9 8" style="position:absolute;left:7px;top:101.25px"><path d="M0.45 1.1 Q0.45 0.4 1.1 0.4 H3.4 Q4 0.4 4.2 1.3 H7.9 Q8.5 1.3 8.5 1.9 V6.6 Q8.5 7.2 7.9 7.2 H1.1 Q0.45 7.2 0.45 6.6 Z" fill="#f4d836" stroke="#a98333" stroke-width="0.8"/><rect x="0.9" y="2" width="7.2" height="1" fill="#fffdf0"/><rect x="0.9" y="3" width="7.2" height="1.2" fill="#fbe986"/><rect x="1.3" y="0.9" width="2.3" height="0.6" fill="#f9e58a"/></svg>
<div class="t" style="left:27px;top:101.55px;font-size:8.5px;line-height:8.5px;color:#163d84;transform:scaleX(0.85);letter-spacing:0.15px;">Proposals</div>
<svg width="9" height="8" viewBox="0 0 9 8" style="position:absolute;left:7px;top:115.75px"><path d="M0.45 1.1 Q0.45 0.4 1.1 0.4 H3.4 Q4 0.4 4.2 1.3 H7.9 Q8.5 1.3 8.5 1.9 V6.6 Q8.5 7.2 7.9 7.2 H1.1 Q0.45 7.2 0.45 6.6 Z" fill="#f4d836" stroke="#a98333" stroke-width="0.8"/><rect x="0.9" y="2" width="7.2" height="1" fill="#fffdf0"/><rect x="0.9" y="3" width="7.2" height="1.2" fill="#fbe986"/><rect x="1.3" y="0.9" width="2.3" height="0.6" fill="#f9e58a"/></svg>
<div class="t" style="left:27px;top:116.05px;font-size:8.5px;line-height:8.5px;color:#163d84;transform:scaleX(0.85);letter-spacing:0.15px;">Protocols</div>
<svg width="9" height="8" viewBox="0 0 9 8" style="position:absolute;left:7px;top:130.25px"><path d="M0.45 1.1 Q0.45 0.4 1.1 0.4 H3.4 Q4 0.4 4.2 1.3 H7.9 Q8.5 1.3 8.5 1.9 V6.6 Q8.5 7.2 7.9 7.2 H1.1 Q0.45 7.2 0.45 6.6 Z" fill="#f4d836" stroke="#a98333" stroke-width="0.8"/><rect x="0.9" y="2" width="7.2" height="1" fill="#fffdf0"/><rect x="0.9" y="3" width="7.2" height="1.2" fill="#fbe986"/><rect x="1.3" y="0.9" width="2.3" height="0.6" fill="#f9e58a"/></svg>
<div class="t" style="left:27px;top:130.55px;font-size:8.5px;line-height:8.5px;color:#163d84;transform:scaleX(0.85);letter-spacing:0.15px;">Sponsor Websites</div>
<svg width="9" height="8" viewBox="0 0 9 8" style="position:absolute;left:7px;top:144.75px"><path d="M0.45 1.1 Q0.45 0.4 1.1 0.4 H3.4 Q4 0.4 4.2 1.3 H7.9 Q8.5 1.3 8.5 1.9 V6.6 Q8.5 7.2 7.9 7.2 H1.1 Q0.45 7.2 0.45 6.6 Z" fill="#f4d836" stroke="#a98333" stroke-width="0.8"/><rect x="0.9" y="2" width="7.2" height="1" fill="#fffdf0"/><rect x="0.9" y="3" width="7.2" height="1.2" fill="#fbe986"/><rect x="1.3" y="0.9" width="2.3" height="0.6" fill="#f9e58a"/></svg>
<div class="t" style="left:27px;top:145.05px;font-size:8.5px;line-height:8.5px;color:#163d84;transform:scaleX(0.85);letter-spacing:0.15px;">Sponsored Projects Office</div>
<svg width="9" height="8" viewBox="0 0 9 8" style="position:absolute;left:7px;top:159.25px"><path d="M0.45 1.1 Q0.45 0.4 1.1 0.4 H3.4 Q4 0.4 4.2 1.3 H7.9 Q8.5 1.3 8.5 1.9 V6.6 Q8.5 7.2 7.9 7.2 H1.1 Q0.45 7.2 0.45 6.6 Z" fill="#f4d836" stroke="#a98333" stroke-width="0.8"/><rect x="0.9" y="2" width="7.2" height="1" fill="#fffdf0"/><rect x="0.9" y="3" width="7.2" height="1.2" fill="#fbe986"/><rect x="1.3" y="0.9" width="2.3" height="0.6" fill="#f9e58a"/></svg>
<div class="t" style="left:27px;top:159.55px;font-size:8.5px;line-height:8.5px;color:#163d84;transform:scaleX(0.85);letter-spacing:0.15px;">Sponsors</div>
<svg width="9" height="8" viewBox="0 0 9 8" style="position:absolute;left:7px;top:173.75px"><path d="M0.45 1.1 Q0.45 0.4 1.1 0.4 H3.4 Q4 0.4 4.2 1.3 H7.9 Q8.5 1.3 8.5 1.9 V6.6 Q8.5 7.2 7.9 7.2 H1.1 Q0.45 7.2 0.45 6.6 Z" fill="#f4d836" stroke="#a98333" stroke-width="0.8"/><rect x="0.9" y="2" width="7.2" height="1" fill="#fffdf0"/><rect x="0.9" y="3" width="7.2" height="1.2" fill="#fbe986"/><rect x="1.3" y="0.9" width="2.3" height="0.6" fill="#f9e58a"/></svg>
<div class="t" style="left:27px;top:174.05px;font-size:8.5px;line-height:8.5px;color:#163d84;transform:scaleX(0.85);letter-spacing:0.15px;">Subrecipients</div>
<svg width="9" height="11" viewBox="0 0 9 11" style="position:absolute;left:7px;top:185.75px"><path d="M0.45 0.45 H6.3 L8.25 2.4 V10.55 H0.45 Z" fill="#cddcf6" stroke="#88a8e8" stroke-width="0.9"/><rect x="0.9" y="0.9" width="0.9" height="9.2" fill="#f5f8ff"/><rect x="7" y="3" width="0.8" height="7.1" fill="#eef4ff"/><rect x="0.9" y="0.9" width="5.4" height="2.1" fill="#fcfdff"/><rect x="0.9" y="9.3" width="6.9" height="0.8" fill="#eef4ff"/><rect x="2.2" y="5" width="4.4" height="0.5" fill="#b9cdf0"/><rect x="2.2" y="7" width="4.4" height="0.5" fill="#b9cdf0"/><path d="M6.1 0.8 L8.1 2.8 V3.1 H6.1 Z" fill="#3e74d4"/></svg>
<div class="t" style="left:27px;top:188.55px;font-size:8.5px;line-height:8.5px;color:#163d84;transform:scaleX(0.85);letter-spacing:0.15px;">Contracts Workbench</div>
<svg width="9" height="11" viewBox="0 0 9 11" style="position:absolute;left:7px;top:200.25px"><path d="M0.45 0.45 H6.3 L8.25 2.4 V10.55 H0.45 Z" fill="#cddcf6" stroke="#88a8e8" stroke-width="0.9"/><rect x="0.9" y="0.9" width="0.9" height="9.2" fill="#f5f8ff"/><rect x="7" y="3" width="0.8" height="7.1" fill="#eef4ff"/><rect x="0.9" y="0.9" width="5.4" height="2.1" fill="#fcfdff"/><rect x="0.9" y="9.3" width="6.9" height="0.8" fill="#eef4ff"/><rect x="2.2" y="5" width="4.4" height="0.5" fill="#b9cdf0"/><rect x="2.2" y="7" width="4.4" height="0.5" fill="#b9cdf0"/><path d="M6.1 0.8 L8.1 2.8 V3.1 H6.1 Z" fill="#3e74d4"/></svg>
<div class="t" style="left:27px;top:203.05px;font-size:8.5px;line-height:8.5px;color:#163d84;transform:scaleX(0.85);letter-spacing:0.15px;">Grants Center</div>
<svg width="9" height="11" viewBox="0 0 9 11" style="position:absolute;left:7px;top:214.75px"><path d="M0.45 0.45 H6.3 L8.25 2.4 V10.55 H0.45 Z" fill="#cddcf6" stroke="#88a8e8" stroke-width="0.9"/><rect x="0.9" y="0.9" width="0.9" height="9.2" fill="#f5f8ff"/><rect x="7" y="3" width="0.8" height="7.1" fill="#eef4ff"/><rect x="0.9" y="0.9" width="5.4" height="2.1" fill="#fcfdff"/><rect x="0.9" y="9.3" width="6.9" height="0.8" fill="#eef4ff"/><rect x="2.2" y="5" width="4.4" height="0.5" fill="#b9cdf0"/><rect x="2.2" y="7" width="4.4" height="0.5" fill="#b9cdf0"/><path d="M6.1 0.8 L8.1 2.8 V3.1 H6.1 Z" fill="#3e74d4"/></svg>
<div class="t" style="left:27px;top:217.55px;font-size:8.5px;line-height:8.5px;color:#163d84;transform:scaleX(0.85);letter-spacing:0.15px;">Grants WorkCenter</div>
<svg width="9" height="11" viewBox="0 0 9 11" style="position:absolute;left:7px;top:229.25px"><path d="M0.45 0.45 H6.3 L8.25 2.4 V10.55 H0.45 Z" fill="#cddcf6" stroke="#88a8e8" stroke-width="0.9"/><rect x="0.9" y="0.9" width="0.9" height="9.2" fill="#f5f8ff"/><rect x="7" y="3" width="0.8" height="7.1" fill="#eef4ff"/><rect x="0.9" y="0.9" width="5.4" height="2.1" fill="#fcfdff"/><rect x="0.9" y="9.3" width="6.9" height="0.8" fill="#eef4ff"/><rect x="2.2" y="5" width="4.4" height="0.5" fill="#b9cdf0"/><rect x="2.2" y="7" width="4.4" height="0.5" fill="#b9cdf0"/><path d="M6.1 0.8 L8.1 2.8 V3.1 H6.1 Z" fill="#3e74d4"/></svg>
<div class="t" style="left:27px;top:232.05px;font-size:8.5px;line-height:8.5px;color:#163d84;transform:scaleX(0.85);letter-spacing:0.15px;">My Proposals</div>
</div>
<div style="position:absolute;left:278px;top:173px;width:181px;height:235px;background:#fff;border:1px solid #6e6e6e;border-top:2px solid #b3b3b3;border-left:2px solid #a9a9a9;border-right-color:#7b7b7b;box-sizing:border-box;box-shadow:0 1.5px 1px rgba(0,0,0,0.4)"></div>
<div style="position:absolute;left:281px;top:186.0px;width:176px;height:15px;background:#f4f4f4"></div>
<svg width="9" height="11" viewBox="0 0 9 11" style="position:absolute;left:286px;top:186.9px"><path d="M0.45 0.45 H6.3 L8.25 2.4 V10.55 H0.45 Z" fill="#cddcf6" stroke="#88a8e8" stroke-width="0.9"/><rect x="0.9" y="0.9" width="0.9" height="9.2" fill="#f5f8ff"/><rect x="7" y="3" width="0.8" height="7.1" fill="#eef4ff"/><rect x="0.9" y="0.9" width="5.4" height="2.1" fill="#fcfdff"/><rect x="0.9" y="9.3" width="6.9" height="0.8" fill="#eef4ff"/><rect x="2.2" y="5" width="4.4" height="0.5" fill="#b9cdf0"/><rect x="2.2" y="7" width="4.4" height="0.5" fill="#b9cdf0"/><path d="M6.1 0.8 L8.1 2.8 V3.1 H6.1 Z" fill="#3e74d4"/></svg>
<div class="t" style="left:306.9px;top:189.90px;font-size:8.5px;line-height:8.5px;color:#8a5c1c;transform:scaleX(0.85);letter-spacing:0.15px;">Award Profile</div>
<svg width="9" height="11" viewBox="0 0 9 11" style="position:absolute;left:286px;top:201.4px"><path d="M0.45 0.45 H6.3 L8.25 2.4 V10.55 H0.45 Z" fill="#cddcf6" stroke="#88a8e8" stroke-width="0.9"/><rect x="0.9" y="0.9" width="0.9" height="9.2" fill="#f5f8ff"/><rect x="7" y="3" width="0.8" height="7.1" fill="#eef4ff"/><rect x="0.9" y="0.9" width="5.4" height="2.1" fill="#fcfdff"/><rect x="0.9" y="9.3" width="6.9" height="0.8" fill="#eef4ff"/><rect x="2.2" y="5" width="4.4" height="0.5" fill="#b9cdf0"/><rect x="2.2" y="7" width="4.4" height="0.5" fill="#b9cdf0"/><path d="M6.1 0.8 L8.1 2.8 V3.1 H6.1 Z" fill="#3e74d4"/></svg>
<div class="t" style="left:306.9px;top:204.40px;font-size:8.5px;line-height:8.5px;color:#1f4f9e;transform:scaleX(0.85);letter-spacing:0.15px;">Commitment Control Errors</div>
<svg width="9" height="11" viewBox="0 0 9 11" style="position:absolute;left:286px;top:215.9px"><path d="M0.45 0.45 H6.3 L8.25 2.4 V10.55 H0.45 Z" fill="#cddcf6" stroke="#88a8e8" stroke-width="0.9"/><rect x="0.9" y="0.9" width="0.9" height="9.2" fill="#f5f8ff"/><rect x="7" y="3" width="0.8" height="7.1" fill="#eef4ff"/><rect x="0.9" y="0.9" width="5.4" height="2.1" fill="#fcfdff"/><rect x="0.9" y="9.3" width="6.9" height="0.8" fill="#eef4ff"/><rect x="2.2" y="5" width="4.4" height="0.5" fill="#b9cdf0"/><rect x="2.2" y="7" width="4.4" height="0.5" fill="#b9cdf0"/><path d="M6.1 0.8 L8.1 2.8 V3.1 H6.1 Z" fill="#3e74d4"/></svg>
<div class="t" style="left:306.9px;top:218.90px;font-size:8.5px;line-height:8.5px;color:#1f4f9e;transform:scaleX(0.85);letter-spacing:0.15px;">Create Continuation</div>
<svg width="9" height="11" viewBox="0 0 9 11" style="position:absolute;left:286px;top:230.4px"><path d="M0.45 0.45 H6.3 L8.25 2.4 V10.55 H0.45 Z" fill="#cddcf6" stroke="#88a8e8" stroke-width="0.9"/><rect x="0.9" y="0.9" width="0.9" height="9.2" fill="#f5f8ff"/><rect x="7" y="3" width="0.8" height="7.1" fill="#eef4ff"/><rect x="0.9" y="0.9" width="5.4" height="2.1" fill="#fcfdff"/><rect x="0.9" y="9.3" width="6.9" height="0.8" fill="#eef4ff"/><rect x="2.2" y="5" width="4.4" height="0.5" fill="#b9cdf0"/><rect x="2.2" y="7" width="4.4" height="0.5" fill="#b9cdf0"/><path d="M6.1 0.8 L8.1 2.8 V3.1 H6.1 Z" fill="#3e74d4"/></svg>
<div class="t" style="left:306.9px;top:233.40px;font-size:8.5px;line-height:8.5px;color:#1f4f9e;transform:scaleX(0.85);letter-spacing:0.15px;">FA Error Interactive Report</div>
<svg width="9" height="11" viewBox="0 0 9 11" style="position:absolute;left:286px;top:244.9px"><path d="M0.45 0.45 H6.3 L8.25 2.4 V10.55 H0.45 Z" fill="#cddcf6" stroke="#88a8e8" stroke-width="0.9"/><rect x="0.9" y="0.9" width="0.9" height="9.2" fill="#f5f8ff"/><rect x="7" y="3" width="0.8" height="7.1" fill="#eef4ff"/><rect x="0.9" y="0.9" width="5.4" height="2.1" fill="#fcfdff"/><rect x="0.9" y="9.3" width="6.9" height="0.8" fill="#eef4ff"/><rect x="2.2" y="5" width="4.4" height="0.5" fill="#b9cdf0"/><rect x="2.2" y="7" width="4.4" height="0.5" fill="#b9cdf0"/><path d="M6.1 0.8 L8.1 2.8 V3.1 H6.1 Z" fill="#3e74d4"/></svg>
<div class="t" style="left:306.9px;top:247.90px;font-size:8.5px;line-height:8.5px;color:#1f4f9e;transform:scaleX(0.85);letter-spacing:0.15px;">Milestone Notification</div>
<svg width="9" height="11" viewBox="0 0 9 11" style="position:absolute;left:286px;top:259.40000000000003px"><path d="M0.45 0.45 H6.3 L8.25 2.4 V10.55 H0.45 Z" fill="#cddcf6" stroke="#88a8e8" stroke-width="0.9"/><rect x="0.9" y="0.9" width="0.9" height="9.2" fill="#f5f8ff"/><rect x="7" y="3" width="0.8" height="7.1" fill="#eef4ff"/><rect x="0.9" y="0.9" width="5.4" height="2.1" fill="#fcfdff"/><rect x="0.9" y="9.3" width="6.9" height="0.8" fill="#eef4ff"/><rect x="2.2" y="5" width="4.4" height="0.5" fill="#b9cdf0"/><rect x="2.2" y="7" width="4.4" height="0.5" fill="#b9cdf0"/><path d="M6.1 0.8 L8.1 2.8 V3.1 H6.1 Z" fill="#3e74d4"/></svg>
<div class="t" style="left:306.9px;top:262.40px;font-size:8.5px;line-height:8.5px;color:#1f4f9e;transform:scaleX(0.85);letter-spacing:0.15px;">Negotiate Award</div>
<svg width="9" height="11" viewBox="0 0 9 11" style="position:absolute;left:286px;top:273.90000000000003px"><path d="M0.45 0.45 H6.3 L8.25 2.4 V10.55 H0.45 Z" fill="#cddcf6" stroke="#88a8e8" stroke-width="0.9"/><rect x="0.9" y="0.9" width="0.9" height="9.2" fill="#f5f8ff"/><rect x="7" y="3" width="0.8" height="7.1" fill="#eef4ff"/><rect x="0.9" y="0.9" width="5.4" height="2.1" fill="#fcfdff"/><rect x="0.9" y="9.3" width="6.9" height="0.8" fill="#eef4ff"/><rect x="2.2" y="5" width="4.4" height="0.5" fill="#b9cdf0"/><rect x="2.2" y="7" width="4.4" height="0.5" fill="#b9cdf0"/><path d="M6.1 0.8 L8.1 2.8 V3.1 H6.1 Z" fill="#3e74d4"/></svg>
<div class="t" style="left:306.9px;top:276.90px;font-size:8.5px;line-height:8.5px;color:#1f4f9e;transform:scaleX(0.85);letter-spacing:0.15px;">Process Facilities Admin</div>
<svg width="9" height="11" viewBox="0 0 9 11" style="position:absolute;left:286px;top:288.40000000000003px"><path d="M0.45 0.45 H6.3 L8.25 2.4 V10.55 H0.45 Z" fill="#cddcf6" stroke="#88a8e8" stroke-width="0.9"/><rect x="0.9" y="0.9" width="0.9" height="9.2" fill="#f5f8ff"/><rect x="7" y="3" width="0.8" height="7.1" fill="#eef4ff"/><rect x="0.9" y="0.9" width="5.4" height="2.1" fill="#fcfdff"/><rect x="0.9" y="9.3" width="6.9" height="0.8" fill="#eef4ff"/><rect x="2.2" y="5" width="4.4" height="0.5" fill="#b9cdf0"/><rect x="2.2" y="7" width="4.4" height="0.5" fill="#b9cdf0"/><path d="M6.1 0.8 L8.1 2.8 V3.1 H6.1 Z" fill="#3e74d4"/></svg>
<div class="t" style="left:306.9px;top:291.40px;font-size:8.5px;line-height:8.5px;color:#1f4f9e;transform:scaleX(0.85);letter-spacing:0.15px;">Process Milestone Notification</div>
<svg width="9" height="11" viewBox="0 0 9 11" style="position:absolute;left:286px;top:302.90000000000003px"><path d="M0.45 0.45 H6.3 L8.25 2.4 V10.55 H0.45 Z" fill="#cddcf6" stroke="#88a8e8" stroke-width="0.9"/><rect x="0.9" y="0.9" width="0.9" height="9.2" fill="#f5f8ff"/><rect x="7" y="3" width="0.8" height="7.1" fill="#eef4ff"/><rect x="0.9" y="0.9" width="5.4" height="2.1" fill="#fcfdff"/><rect x="0.9" y="9.3" width="6.9" height="0.8" fill="#eef4ff"/><rect x="2.2" y="5" width="4.4" height="0.5" fill="#b9cdf0"/><rect x="2.2" y="7" width="4.4" height="0.5" fill="#b9cdf0"/><path d="M6.1 0.8 L8.1 2.8 V3.1 H6.1 Z" fill="#3e74d4"/></svg>
<div class="t" style="left:306.9px;top:305.90px;font-size:8.5px;line-height:8.5px;color:#1f4f9e;transform:scaleX(0.85);letter-spacing:0.15px;">Process Retroactive F&amp;A</div>
<svg width="9" height="11" viewBox="0 0 9 11" style="position:absolute;left:286px;top:317.40000000000003px"><path d="M0.45 0.45 H6.3 L8.25 2.4 V10.55 H0.45 Z" fill="#cddcf6" stroke="#88a8e8" stroke-width="0.9"/><rect x="0.9" y="0.9" width="0.9" height="9.2" fill="#f5f8ff"/><rect x="7" y="3" width="0.8" height="7.1" fill="#eef4ff"/><rect x="0.9" y="0.9" width="5.4" height="2.1" fill="#fcfdff"/><rect x="0.9" y="9.3" width="6.9" height="0.8" fill="#eef4ff"/><rect x="2.2" y="5" width="4.4" height="0.5" fill="#b9cdf0"/><rect x="2.2" y="7" width="4.4" height="0.5" fill="#b9cdf0"/><path d="M6.1 0.8 L8.1 2.8 V3.1 H6.1 Z" fill="#3e74d4"/></svg>
<div class="t" style="left:306.9px;top:320.40px;font-size:8.5px;line-height:8.5px;color:#1f4f9e;transform:scaleX(0.85);letter-spacing:0.15px;">Project</div>
<svg width="9" height="11" viewBox="0 0 9 11" style="position:absolute;left:286px;top:331.90000000000003px"><path d="M0.45 0.45 H6.3 L8.25 2.4 V10.55 H0.45 Z" fill="#cddcf6" stroke="#88a8e8" stroke-width="0.9"/><rect x="0.9" y="0.9" width="0.9" height="9.2" fill="#f5f8ff"/><rect x="7" y="3" width="0.8" height="7.1" fill="#eef4ff"/><rect x="0.9" y="0.9" width="5.4" height="2.1" fill="#fcfdff"/><rect x="0.9" y="9.3" width="6.9" height="0.8" fill="#eef4ff"/><rect x="2.2" y="5" width="4.4" height="0.5" fill="#b9cdf0"/><rect x="2.2" y="7" width="4.4" height="0.5" fill="#b9cdf0"/><path d="M6.1 0.8 L8.1 2.8 V3.1 H6.1 Z" fill="#3e74d4"/></svg>
<div class="t" style="left:306.9px;top:334.90px;font-size:8.5px;line-height:8.5px;color:#1f4f9e;transform:scaleX(0.85);letter-spacing:0.15px;">Project Activity</div>
<svg width="9" height="11" viewBox="0 0 9 11" style="position:absolute;left:286px;top:346.40000000000003px"><path d="M0.45 0.45 H6.3 L8.25 2.4 V10.55 H0.45 Z" fill="#cddcf6" stroke="#88a8e8" stroke-width="0.9"/><rect x="0.9" y="0.9" width="0.9" height="9.2" fill="#f5f8ff"/><rect x="7" y="3" width="0.8" height="7.1" fill="#eef4ff"/><rect x="0.9" y="0.9" width="5.4" height="2.1" fill="#fcfdff"/><rect x="0.9" y="9.3" width="6.9" height="0.8" fill="#eef4ff"/><rect x="2.2" y="5" width="4.4" height="0.5" fill="#b9cdf0"/><rect x="2.2" y="7" width="4.4" height="0.5" fill="#b9cdf0"/><path d="M6.1 0.8 L8.1 2.8 V3.1 H6.1 Z" fill="#3e74d4"/></svg>
<div class="t" style="left:306.9px;top:349.40px;font-size:8.5px;line-height:8.5px;color:#1f4f9e;transform:scaleX(0.85);letter-spacing:0.15px;">Project Budget Inquiry</div>
<svg width="9" height="11" viewBox="0 0 9 11" style="position:absolute;left:286px;top:360.90000000000003px"><path d="M0.45 0.45 H6.3 L8.25 2.4 V10.55 H0.45 Z" fill="#cddcf6" stroke="#88a8e8" stroke-width="0.9"/><rect x="0.9" y="0.9" width="0.9" height="9.2" fill="#f5f8ff"/><rect x="7" y="3" width="0.8" height="7.1" fill="#eef4ff"/><rect x="0.9" y="0.9" width="5.4" height="2.1" fill="#fcfdff"/><rect x="0.9" y="9.3" width="6.9" height="0.8" fill="#eef4ff"/><rect x="2.2" y="5" width="4.4" height="0.5" fill="#b9cdf0"/><rect x="2.2" y="7" width="4.4" height="0.5" fill="#b9cdf0"/><path d="M6.1 0.8 L8.1 2.8 V3.1 H6.1 Z" fill="#3e74d4"/></svg>
<div class="t" style="left:306.9px;top:363.90px;font-size:8.5px;line-height:8.5px;color:#1f4f9e;transform:scaleX(0.85);letter-spacing:0.15px;">Project Budgets</div>
<svg width="9" height="11" viewBox="0 0 9 11" style="position:absolute;left:286px;top:375.40000000000003px"><path d="M0.45 0.45 H6.3 L8.25 2.4 V10.55 H0.45 Z" fill="#cddcf6" stroke="#88a8e8" stroke-width="0.9"/><rect x="0.9" y="0.9" width="0.9" height="9.2" fill="#f5f8ff"/><rect x="7" y="3" width="0.8" height="7.1" fill="#eef4ff"/><rect x="0.9" y="0.9" width="5.4" height="2.1" fill="#fcfdff"/><rect x="0.9" y="9.3" width="6.9" height="0.8" fill="#eef4ff"/><rect x="2.2" y="5" width="4.4" height="0.5" fill="#b9cdf0"/><rect x="2.2" y="7" width="4.4" height="0.5" fill="#b9cdf0"/><path d="M6.1 0.8 L8.1 2.8 V3.1 H6.1 Z" fill="#3e74d4"/></svg>
<div class="t" style="left:306.9px;top:378.40px;font-size:8.5px;line-height:8.5px;color:#1f4f9e;transform:scaleX(0.85);letter-spacing:0.15px;">Review Award Modifications</div>
<svg width="9" height="11" viewBox="0 0 9 11" style="position:absolute;left:286px;top:389.90000000000003px"><path d="M0.45 0.45 H6.3 L8.25 2.4 V10.55 H0.45 Z" fill="#cddcf6" stroke="#88a8e8" stroke-width="0.9"/><rect x="0.9" y="0.9" width="0.9" height="9.2" fill="#f5f8ff"/><rect x="7" y="3" width="0.8" height="7.1" fill="#eef4ff"/><rect x="0.9" y="0.9" width="5.4" height="2.1" fill="#fcfdff"/><rect x="0.9" y="9.3" width="6.9" height="0.8" fill="#eef4ff"/><rect x="2.2" y="5" width="4.4" height="0.5" fill="#b9cdf0"/><rect x="2.2" y="7" width="4.4" height="0.5" fill="#b9cdf0"/><path d="M6.1 0.8 L8.1 2.8 V3.1 H6.1 Z" fill="#3e74d4"/></svg>
<div class="t" style="left:306.9px;top:392.90px;font-size:8.5px;line-height:8.5px;color:#1f4f9e;transform:scaleX(0.85);letter-spacing:0.15px;">Review Retroactive F&amp;A</div>
<div style="position:absolute;left:289px;top:479px;width:351px;height:1px;background:linear-gradient(90deg,#767b82 0 16.5px,#c9d6e6 16.5px 19px,#70767d 19px 56px,#c3cfdf 56px 59px,#72787f 59px 134px,#c6d3e4 134px 137px,#70767d 137px 167px,#c5d2e2 167px 170px,#767c83 170px 206px,#b9c6d6 206px 341px,#6c6c6c 341px)"></div>
</body></html>
